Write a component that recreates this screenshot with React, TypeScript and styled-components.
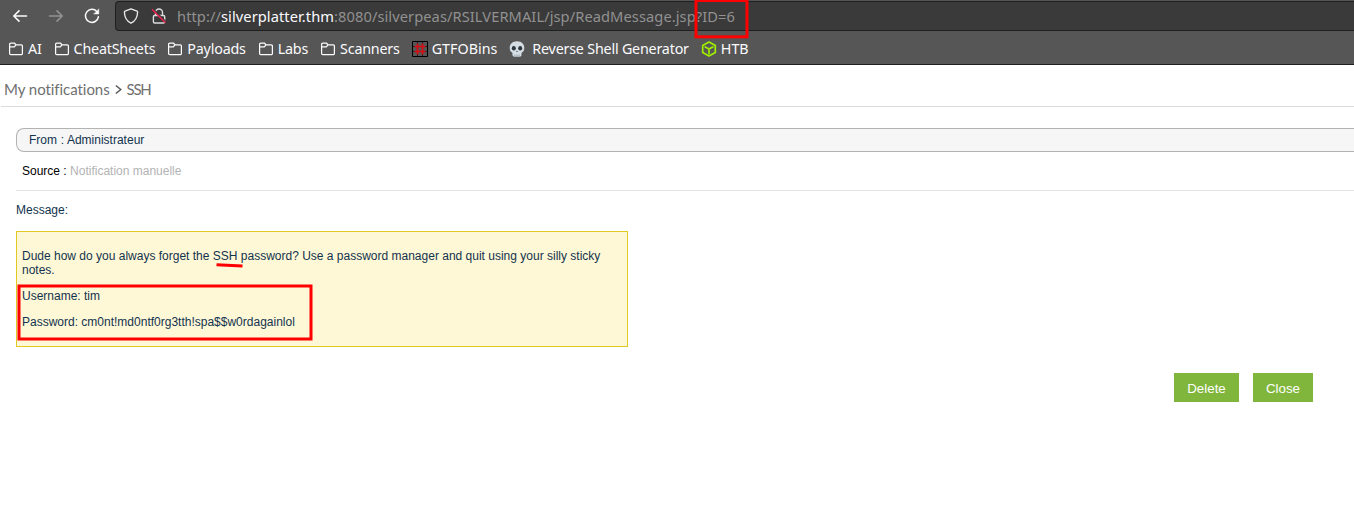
import React from 'react';
import styled, { createGlobalStyle } from 'styled-components';

const Global = createGlobalStyle`
  * { box-sizing: border-box; }
  body { margin: 0; background: #fff; overflow: hidden; font-family: "Liberation Sans", Arial, sans-serif; }
`;

const Page = styled.div`
  position: relative;
  height: 526px;
  overflow: hidden;
`;

const Browser = styled.header`
  height: 65px;
  background: #565656;
  border-bottom: 1px solid #1e2020;
  font-family: "Noto Sans", sans-serif;
  white-space: nowrap;
`;

const Toolbar = styled.div`
  display: flex;
  height: 32px;
  padding-top: 1px;
`;

const NavButtons = styled.nav`
  display: flex;
  width: 115px;
  height: 30px;
  padding-left: 12px;
  gap: 20px;
  align-items: center;
  svg { display: block; flex: none; }
`;

const AddressBar = styled.div`
  display: flex;
  flex: 1;
  height: 30px;
  align-items: center;
  padding-left: 7px;
  background: #3a3a3a;
  border: 1px solid #1e2020;
  border-right: 0;
  border-radius: 4px 0 0 4px;
  svg { display: block; flex: none; margin-right: 12px; }
`;

const Url = styled.span`
  color: #919191;
  font-size: 14.67px;
  letter-spacing: 0.07px;
  line-height: 20px;
  margin-left: -2px;
  b { font-weight: 400; color: #fbfbfe; }
`;

const Bookmarks = styled.div`
  display: flex;
  height: 32px;
  align-items: center;
  padding: 2px 0 0 8px;
  gap: 12px;
`;

const Bookmark = styled.span<{ $gap?: number; $spacing?: number }>`
  display: flex;
  align-items: center;
  gap: ${(p) => p.$gap ?? 4}px;
  color: #fbfbfe;
  font-size: 14.3px;
  letter-spacing: ${(p) => p.$spacing ?? -0.2}px;
  line-height: 20px;
  svg { display: block; flex: none; }
`;

const Breadcrumb = styled.h1`
  display: flex;
  align-items: center;
  gap: 5px;
  margin: 0 0 0 1px;
  padding: 7px 0 0 3px;
  height: 42px;
  border-bottom: 1px solid #dcdcdc;
  color: #707070;
  font-family: Lato, sans-serif;
  font-size: 15px;
  font-weight: 400;
  line-height: 20px;
`;

const Crumb = styled.span<{ $spacing: number }>`
  letter-spacing: ${(p) => p.$spacing}px;
`;

const Content = styled.main`
  padding: 21px 0 0 16px;
  font-size: 12px;
  line-height: 14px;
  color: #12334e;
`;

const Sender = styled.div`
  height: 24px;
  padding: 4px 12px;
  background: #f6f6f6;
  border: 1px solid #b3b3b3;
  border-right: 0;
  border-radius: 8px 0 0 8px;
  word-spacing: 0.3px;
`;

const Source = styled.div`
  height: 39px;
  padding: 12px 6px 0;
  color: #b3b3b3;
  border-bottom: 1px solid #e3e3e3;
  b { font-weight: 400; color: #000; }
`;

const Label = styled.div`
  padding-top: 12px;
  height: 40px;
`;

const Note = styled.section`
  width: 612px;
  height: 116px;
  padding: 17px 5px 0;
  background: #fff8d7;
  border: 1px solid #e2c822;
  p { margin: 0 0 12px; }
`;

const Actions = styled.div`
  display: flex;
  justify-content: flex-end;
  gap: 14px;
  padding: 26px 41px 0 0;
`;

const Button = styled.button<{ $width: number }>`
  width: ${(p) => p.$width}px;
  height: 29px;
  padding: 2px 0 0;
  border: 0;
  background: #80b63c;
  color: #fff;
  font: 13.33px "Liberation Sans", Arial, sans-serif;
`;

const Marks = styled.svg`
  position: absolute;
  inset: 0;
  pointer-events: none;
`;

const Arrow = ({ color, flip }: { color: string; flip?: boolean }) => (
  <svg width="16" height="16" viewBox="0 0 16 16" fill="none" stroke={color} strokeWidth="1.6" strokeLinecap="round" strokeLinejoin="round">
    <path transform={flip ? 'matrix(-1 0 0 1 16 0)' : undefined} d="M14.5 8H2M7 2.9L1.8 8L7 13.1" />
  </svg>
);

const Reload = () => (
  <svg width="16" height="16" viewBox="0 0 16 16" fill="none" stroke="#fbfbfe" strokeWidth="1.5" strokeLinecap="round">
    <path d="M12.8 3.5A6.5 6.5 0 1 0 14.4 8.8" />
    <path d="M14.8 1.2V6H10z" fill="#fbfbfe" stroke="#fbfbfe" strokeWidth=".5" strokeLinejoin="round" />
  </svg>
);

const Shield = () => (
  <svg width="16" height="16" viewBox="0 0 16 16" fill="none" stroke="#e8e8ea" strokeWidth="1.35" strokeLinejoin="round">
    <path d="M8 .8L14 3.2Q14.7 3.5 14.6 4.3C14.4 9.5 12 13.3 8 15.2C4 13.3 1.6 9.5 1.4 4.3Q1.3 3.5 2 3.2Z" />
  </svg>
);

const Lock = () => (
  <svg width="16" height="16" viewBox="0 0 16 16" fill="none">
    <path d="M4.5 7.5V4.5a3.5 3.5 0 0 1 7 0v3M4 7.5h8.5a1.2 1.2 0 0 1 1.2 1.2v5.1a1.2 1.2 0 0 1-1.2 1.2H3.6a1.2 1.2 0 0 1-1.2-1.2V8.7A1.2 1.2 0 0 1 3.6 7.5z" stroke="#dcdcde" strokeWidth="1.4" />
    <path d="M2.6 1.5L15 13.8" stroke="#3a3a3a" strokeWidth="1.2" />
    <path d="M1 1.3L14.5 14.8" stroke="#e8204c" strokeWidth="1.5" />
  </svg>
);

const Folder = () => (
  <svg width="16" height="16" viewBox="0 0 16 16" fill="none" stroke="#fbfbfe" strokeWidth="1.25" strokeLinejoin="round">
    <path d="M1.6 12.5V3.2A1.2 1.2 0 0 1 2.8 2H6.3L8 3.8H13.2A1.2 1.2 0 0 1 14.4 5V12.5A1.2 1.2 0 0 1 13.2 13.7H2.8A1.2 1.2 0 0 1 1.6 12.5zM1.6 5.8H6.3L8 3.8" />
  </svg>
);

const Hash = () => (
  <svg width="16" height="16" viewBox="0 0 16 16" fill="none">
    <path d="M.5 .5H15.5V15.5H.5z" stroke="#000" />
    <path d="M5.5 1V3M10.5 1V3M5.5 13V15M10.5 13V15M1 5.5H3M13 5.5H15M1 10.5H3M13 10.5H15" stroke="#111" strokeWidth=".8" />
    <path d="M2.5 5.5H13.5M2.5 10.5H13.5M5.5 2.5V13.5M10.5 2.5V13.5" stroke="#d60d12" strokeWidth="1.7" />
  </svg>
);

const Skull = () => (
  <svg width="16" height="16" viewBox="0 0 16 16">
    <path d="M8 .2C3.5.2.7 3 .7 6.8C.7 9 1.4 10.8 3.1 11.5C3.7 12 3.3 13 3.6 14.4C4 15.8 5.5 15.8 8 15.8S12 15.8 12.4 14.4C12.7 13 12.3 12 12.9 11.5C14.6 10.8 15.3 9 15.3 6.8C15.3 3 12.5.2 8 .2z" fill="#d3dde3" />
    <ellipse cx="4.8" cy="7.2" rx="2" ry="2.2" fill="#2f373d" />
    <ellipse cx="11.2" cy="7.2" rx="2" ry="2.2" fill="#2f373d" />
    <path d="M8 9.6L7.2 11H8.8z" fill="#3b444a" />
    <path d="M5.9 13.6V15.5M8 13.6V15.5M10.1 13.6V15.5" stroke="#6c7880" strokeWidth=".6" />
  </svg>
);

const Cube = () => (
  <svg width="16" height="16" viewBox="0 0 16 16" fill="none" stroke="#9fef00" strokeWidth="1.7" strokeLinejoin="round">
    <path d="M8 1L14.3 4.5V11.5L8 15L1.7 11.5V4.5zM4.2 5.9L8 8.1L11.8 5.9M8 8.1V12.5" strokeLinecap="round" />
  </svg>
);

const folders = ['AI', 'CheatSheets', 'Payloads', 'Labs', 'Scanners'];

export default function App() {
  return (
    <Page>
      <Global />
      <Browser>
        <Toolbar>
          <NavButtons>
            <Arrow color="#fbfbfe" />
            <Arrow color="#929292" flip />
            <Reload />
          </NavButtons>
          <AddressBar>
            <Shield />
            <Lock />
            <Url>http://<b>silverplatter.thm</b>:8080/silverpeas/RSILVERMAIL/jsp/ReadMessage.jsp?ID=6</Url>
          </AddressBar>
        </Toolbar>
        <Bookmarks>
          {folders.map((name) => (
            <Bookmark key={name}><Folder />{name}</Bookmark>
          ))}
          <Bookmark $spacing={0}><Hash />GTFOBins</Bookmark>
          <Bookmark $gap={7}><Skull />Reverse Shell Generator</Bookmark>
          <Bookmark $spacing={0}><Cube />HTB</Bookmark>
        </Bookmarks>
      </Browser>
      <Breadcrumb>
        <Crumb $spacing={-0.05}>My notifications</Crumb>
        <svg width="7" height="10" viewBox="0 0 7 10" fill="none" stroke="#555" strokeWidth="1.4"><path d="M.8 1.5L5.8 5.5L.8 9.5" /></svg>
        <Crumb $spacing={-1.3}>SSH</Crumb>
      </Breadcrumb>
      <Content>
        <Sender>From : Administrateur</Sender>
        <Source><b>Source :</b> Notification manuelle</Source>
        <Label>Message:</Label>
        <Note>
          <p>Dude how do you always forget the SSH password? Use a password manager and quit using your silly sticky notes.</p>
          <p>Username: tim</p>
          <p>Password: cm0nt!md0ntf0rg3tth!spa$$w0rdagainlol</p>
        </Note>
        <Actions>
          <Button $width={65}>Delete</Button>
          <Button $width={60}>Close</Button>
        </Actions>
      </Content>
      <Marks width="1354" height="526" viewBox="0 0 1354 526" fill="none" stroke="#f00" strokeWidth="3">
        <rect x="696" y="0.5" width="51" height="36.3" />
        <rect x="19" y="286" width="292" height="53" />
        <path d="M216.5 264.7L242.5 266" />
      </Marks>
    </Page>
  );
}
